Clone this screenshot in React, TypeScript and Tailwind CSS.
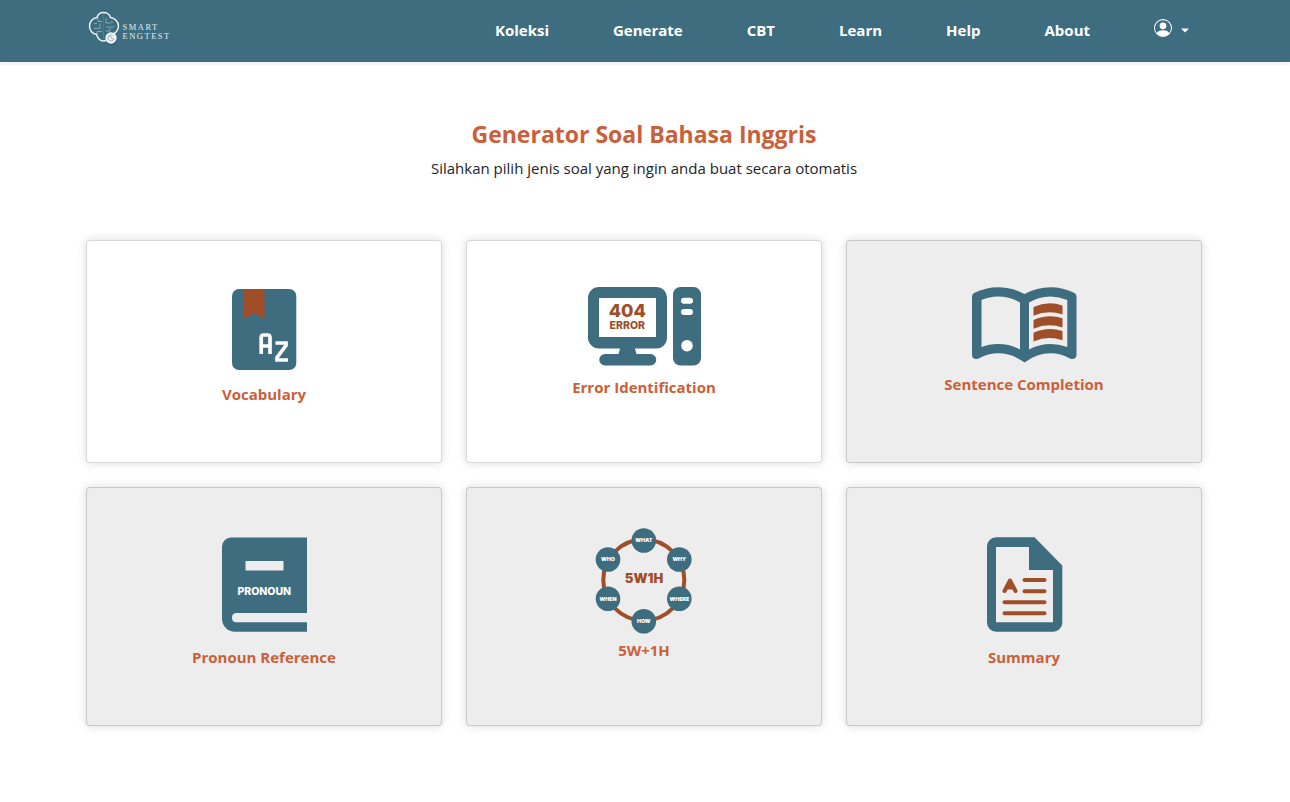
import type { ReactNode } from "react";

const links = ["Koleksi", "Generate", "CBT", "Learn", "Help", "About"];

function Logo() {
  return (
    <svg width="88" height="36" viewBox="0 0 88 36" role="img" aria-label="Smart Engtest">
      <g fill="none" stroke="#8fadb9" strokeWidth="0.9">
        <path d="M6 17.500h6v-5M6 12.500h3M10 7v3.500h4M9 24v-3.500h5M18 7v5h5M18 16h8M18 20h4v-3M24 10v2" />
      </g>
      <path d="M15.500 3V28" stroke="#8b6659" strokeWidth="1" />
      <path
        d="M9 6.500C10 3 13 1.500 15.500 1.500S21.500 3 22.500 6.500C26.500 7 30.500 10.500 30.500 15S27 23 23.300 23.500C22 28 18.500 30 15.500 30S10 28 8.500 23.500C4.500 23 1.500 19.500 1.500 15S4.800 7 9 6.500Z"
        fill="none"
        stroke="#f4f7f8"
        strokeWidth="1.400"
      />
      <circle cx="23.500" cy="28.500" r="6" fill="#2f5667" opacity="0.600" />
      <circle cx="23" cy="27" r="5.700" fill="#f1f5f6" />
      <path d="M25.500 25.300a3 3 0 1 0 .4 2.500h-2.600M21.500 25.500l2.500 1" fill="none" stroke="#8daab6" strokeWidth="0.900" />
      <g fill="#e3ebee" fontFamily="'Liberation Serif', serif" fontSize="8.500">
        <text x="34.500" y="19" letterSpacing="1.500">SMART</text>
        <text x="34.500" y="28" letterSpacing="1.500">ENGTEST</text>
      </g>
    </svg>
  );
}

function VocabularyIcon() {
  return (
    <svg width="120" height="101" viewBox="0 1 120 101" aria-hidden="true">
      <rect x="28" y="9" width="64.300" height="81" rx="7" fill="#3f6d80" />
      <path d="M39.500 9H60.500V39L50 33.300L39.500 39Z" fill="#a04d2a" />
      <path
        d="M57.200 74V57.500Q57.200 55 59.700 55H63.500Q66 55 66 57.500V74M57.200 66H66M71.500 63H82V65.500L73 77.500V80H84"
        fill="none"
        stroke="#fff"
        strokeWidth="3.700"
      />
    </svg>
  );
}

function ErrorIcon() {
  return (
    <svg width="160" height="94" viewBox="0 6 160 94" aria-hidden="true">
      <path
        fillRule="evenodd"
        fill="#3f6d80"
        d="M35 12H92.500A10.500 10.500 0 0 1 103 22.500V63A10.500 10.500 0 0 1 92.500 73.500H71L72.500 79H86.500A5.700 5.700 0 0 1 86.500 90.500H41A5.700 5.700 0 0 1 41 79H54.500L56 73.500H35A11 11 0 0 1 24 62.500V23A11 11 0 0 1 35 12ZM35 23V62H92V23Z"
      />
      <rect x="109" y="12" width="28" height="78.500" rx="7.500" fill="#3f6d80" />
      <rect x="117" y="22.700" width="12" height="6" rx="3" fill="#fff" />
      <rect x="117" y="34" width="12" height="6" rx="3" fill="#fff" />
      <circle cx="123" cy="70.700" r="5.800" fill="#fff" />
      <g fill="#a04d2a" fontFamily="Inter, sans-serif" fontWeight="800" textAnchor="middle">
        <text x="63.300" y="41.500" fontSize="18">404</text>
        <text x="63.300" y="53.500" fontSize="10.500">ERROR</text>
      </g>
    </svg>
  );
}

function BookIcon() {
  return (
    <svg width="180" height="91" viewBox="0 6 180 91" aria-hidden="true">
      <path
        fillRule="evenodd"
        fill="#3f6d80"
        d="M90.500 19Q78 12.300 64 12.300Q52 12.300 40 18Q38 19 38 21.500V79.500Q38 84 42.500 84Q44 84 45.500 83Q54 78.300 64 78.300Q78 78.300 90.500 87.500Q103 78.300 116.500 78.300Q127 78.300 135 83Q136.500 84 138 84Q142.500 84 142.500 79.500V21.500Q142.500 19 140.500 18Q129 12.300 116.500 12.300Q103 12.300 90.500 19ZM47.500 25Q55 21.500 64 21.500Q76 21.500 86 27.500V74.500Q76 69 64 69Q55 69 47.500 72ZM95 27.500Q105 21.500 116.500 21.500Q125 21.500 133.300 25V72Q125 69 116.500 69Q105 69 95 74.500Z"
      />
      <g fill="#a04d2a">
        <path d="M99.500 32Q114 25.500 128.500 30.500V39.500Q114 34.500 99.500 40.700Z" />
        <path d="M99.500 45Q114 38.500 128.500 43.300V52.500Q114 47.500 99.500 53.700Z" />
        <path d="M99.500 57.800Q114 51.300 128.500 56V65.200Q114 60.200 99.500 66.400Z" />
      </g>
    </svg>
  );
}

function PronounIcon() {
  return (
    <svg width="160" height="117" viewBox="0 3 160 117" aria-hidden="true">
      <path
        fill="#3f6d80"
        d="M123 12.500V88H52A4.700 4.700 0 0 0 52 97.300H123V106.700H51A13 13 0 0 1 38 93.700V21.500A9 9 0 0 1 47 12.500Z"
      />
      <rect x="61.500" y="36" width="38" height="9.500" fill="#ededed" />
      <text x="80.300" y="69.800" fontSize="10.500" fontFamily="Inter, sans-serif" fontWeight="800" textAnchor="middle" fill="#fff">
        PRONOUN
      </text>
    </svg>
  );
}

const nodes: [string, number, number][] = [
  ["WHAT", 59.8, 20.5],
  ["WHY", 95.3, 39.5],
  ["WHERE", 95.3, 78.8],
  ["HOW", 59.8, 101.3],
  ["WHEN", 24, 78.8],
  ["WHO", 24, 39.5],
];

function QuestionIcon() {
  return (
    <svg width="120" height="110" viewBox="0 8 120 110" aria-hidden="true">
      <circle cx="59.800" cy="60" r="40.500" fill="none" stroke="#a04d2a" strokeWidth="4" />
      <g fontFamily="Inter, sans-serif" fontWeight="900" textAnchor="middle">
        {nodes.map(([label, x, y]) => (
          <g key={label}>
            <circle cx={x} cy={y} r="12.300" fill="#3f6d80" />
            <text x={x} y={y + 1.9} fontSize="5.300" fill="#fff">
              {label}
            </text>
          </g>
        ))}
        <text x="60" y="63" fontSize="13" fill="#a04d2a">5W1H</text>
      </g>
    </svg>
  );
}

function SummaryIcon() {
  return (
    <svg width="120" height="117" viewBox="0 3 120 117" aria-hidden="true">
      <path
        fillRule="evenodd"
        fill="#3f6d80"
        d="M32 12.300H70.500L98.300 40.500V97.700A9 9 0 0 1 89.300 106.700H32A9 9 0 0 1 23 97.700V21.300A9 9 0 0 1 32 12.300ZM32 22V97.300H89V45H65V22Z"
      />
      <g fill="none" stroke="#a04d2a" strokeWidth="4" strokeLinecap="round" strokeLinejoin="round">
        <path d="M60.500 55H80.500M60.500 66.200H80.500M40.500 77.200H80.500M40.500 88.300H80.500" />
        <path d="M40.500 66L46 55.500L51.500 66M43.500 62.500H48.500" />
      </g>
    </svg>
  );
}

const cards: { title: string; icon: ReactNode; active: boolean }[] = [
  { title: "Vocabulary", icon: <VocabularyIcon />, active: true },
  { title: "Error Identification", icon: <ErrorIcon />, active: true },
  { title: "Sentence Completion", icon: <BookIcon />, active: false },
  { title: "Pronoun Reference", icon: <PronounIcon />, active: false },
  { title: "5W+1H", icon: <QuestionIcon />, active: false },
  { title: "Summary", icon: <SummaryIcon />, active: false },
];

export default function App() {
  return (
    <div className="min-h-screen bg-white font-['Open_Sans','Noto_Sans',sans-serif] text-[#212529]">
      <header className="bg-[#3f6d80] pr-0.5 shadow-[0_2px_4px_rgba(0,0,0,0.075)]">
        <div className="mx-auto flex h-[62px] max-w-[1140px] items-center justify-between px-3">
          <a href="#" className="pb-1 pl-0.5">
            <Logo />
          </a>
          <nav className="flex items-center gap-16 pr-3 pb-0.5 text-[15px] font-bold text-white">
            {links.map((label) => (
              <a key={label} href="#">
                {label}
              </a>
            ))}
            <button type="button" aria-label="Account" className="flex items-center gap-2 pb-1">
              <svg width="18" height="18" viewBox="0 0 16 16" fill="currentColor" aria-hidden="true">
                <path d="M11 6a3 3 0 1 1-6 0 3 3 0 0 1 6 0" />
                <path
                  fillRule="evenodd"
                  d="M0 8a8 8 0 1 1 16 0A8 8 0 0 1 0 8m8-7a7 7 0 0 0-5.468 11.370C3.242 11.226 4.805 10 8 10s4.757 1.225 5.468 2.370A7 7 0 0 0 8 1"
                />
              </svg>
              <svg width="10" height="5" viewBox="0 0 10 5" fill="currentColor" className="mt-1" aria-hidden="true">
                <path d="M1 0.500H9L5 4.500Z" />
              </svg>
            </button>
          </nav>
        </div>
      </header>
      <div className="pr-0.5">
        <main className="mx-auto max-w-[1140px] px-3 pt-14 pb-12">
          <div className="text-center">
            <h1 className="text-[23px] leading-8 font-bold text-[#c9603a]">Generator Soal Bahasa Inggris</h1>
            <p className="mt-1.5 text-[15px] leading-6">Silahkan pilih jenis soal yang ingin anda buat secara otomatis</p>
          </div>
          <div className="mt-15 grid grid-cols-1 gap-6 sm:grid-cols-2 lg:grid-cols-3">
            {cards.map(({ title, icon, active }) => (
              <a
                key={title}
                href="#"
                className={`flex flex-col items-center rounded border border-black/15 px-4 pt-10 pb-14 shadow-[0_0_10px_rgba(0,0,0,0.15)] ${active ? "bg-white" : "bg-[#ededed]"}`}
              >
                {icon}
                <h2 className="text-center text-[15px] leading-6 font-bold text-[#c9603a]">{title}</h2>
              </a>
            ))}
          </div>
        </main>
      </div>
    </div>
  );
}
